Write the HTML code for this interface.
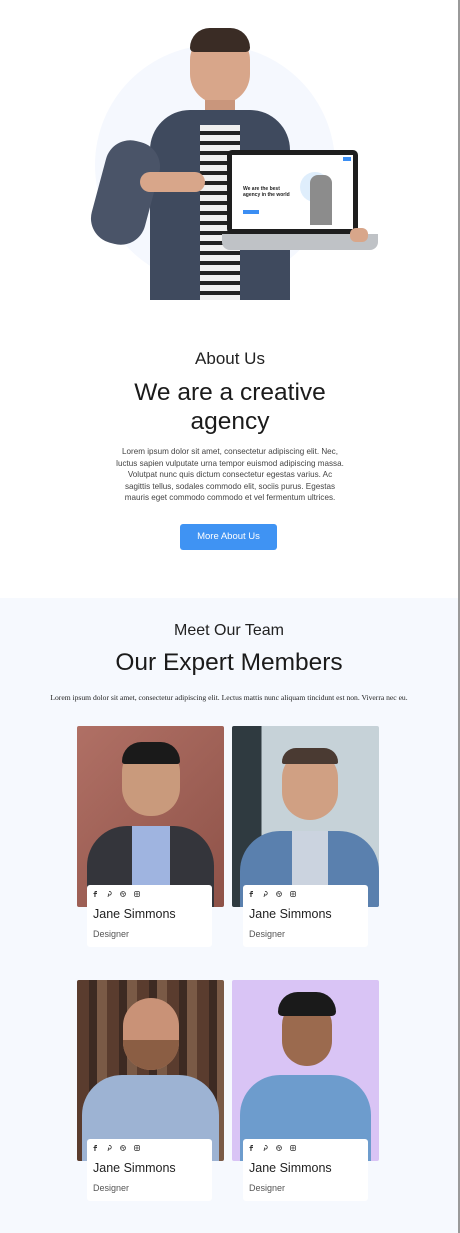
<!DOCTYPE html>
<html><head><meta charset="utf-8">
<style>
*{margin:0;padding:0;box-sizing:border-box}
body{width:460px;height:1233px;overflow:hidden;background:#fff;font-family:"Liberation Sans",sans-serif;color:#1f1f1f;position:relative}
.edge{position:absolute;right:0;top:0;width:2px;height:1233px;background:#9a9a9a}
.abs{position:absolute}
.c{text-align:center;width:100%;left:0}
.team{position:absolute;top:598px;left:0;width:458px;height:635px;background:#f6f9fe}
.photo{position:absolute;width:147px;height:181px;border-radius:2px;overflow:hidden}
.card{position:absolute;width:125px;height:62px;background:#fff;border-radius:3px}
.card .ic{position:absolute;top:6px;left:5px;display:flex;gap:8px}
.card .ic svg{width:6px;height:6px}
.card .n{position:absolute;left:6px;top:22px;font-size:12.5px;color:#222}
.card .r{position:absolute;left:6px;top:44px;font-size:9px;color:#555}
</style></head><body>
<div class="edge"></div>
<div class="abs" style="left:95px;top:45px;width:240px;height:240px;border-radius:50%;background:#f5f8fe"></div>
<div class="abs" style="left:190px;top:32px;width:60px;height:72px;border-radius:28px 28px 30px 30px;background:#d8a68a"></div>
<div class="abs" style="left:190px;top:28px;width:60px;height:24px;border-radius:28px 28px 6px 6px;background:#3a2c25"></div>
<div class="abs" style="left:205px;top:100px;width:30px;height:30px;background:#c9967c"></div>
<div class="abs" style="left:150px;top:110px;width:140px;height:190px;border-radius:40px 40px 0 0;background:#3f4a5e"></div>
<div class="abs" style="left:200px;top:125px;width:40px;height:175px;background:repeating-linear-gradient(#f0f0f0 0 6px,#222 6px 10px)"></div>
<div class="abs" style="left:98px;top:140px;width:55px;height:105px;border-radius:25px;background:#4a5468;transform:rotate(15deg)"></div>
<div class="abs" style="left:140px;top:172px;width:65px;height:20px;border-radius:10px;background:#d8a68a"></div>
<div class="abs" style="left:227px;top:150px;width:131px;height:84px;background:#1e1e1e;border-radius:5px"></div>
<div class="abs" style="left:232px;top:155px;width:121px;height:74px;background:#fff"></div>
<div class="abs" style="left:243px;top:186px;font-size:5px;font-weight:bold;line-height:6px">We are the best<br>agency in the world</div>
<div class="abs" style="left:243px;top:210px;width:16px;height:4px;background:#3b8ef3"></div>
<div class="abs" style="left:343px;top:157px;width:8px;height:4px;background:#3b8ef3"></div>
<div class="abs" style="left:300px;top:172px;width:30px;height:30px;border-radius:50%;background:#dfeefc"></div>
<div class="abs" style="left:310px;top:175px;width:22px;height:50px;background:#8c8c8c;border-radius:8px 8px 0 0"></div>
<div class="abs" style="left:222px;top:234px;width:156px;height:16px;background:#bfc2c6;border-radius:0 0 8px 8px"></div>
<div class="abs" style="left:350px;top:228px;width:18px;height:14px;border-radius:6px;background:#d8a68a"></div>

<div class="abs c" style="top:349px;font-size:17px;color:#222">About Us</div>
<div class="abs c" style="top:378px;font-size:24.5px;line-height:29px;color:#1b1b1b">We are a creative<br>agency</div>
<div class="abs c" style="top:446px;font-size:8.1px;line-height:11.6px;color:#444">Lorem ipsum dolor sit amet, consectetur adipiscing elit. Nec,<br>luctus sapien vulputate urna tempor euismod adipiscing massa.<br>Volutpat nunc quis dictum consectetur egestas varius. Ac<br>sagittis tellus, sodales commodo elit, sociis purus. Egestas<br>mauris eget commodo commodo et vel fermentum ultrices.</div>
<div class="abs" style="left:180px;top:524px;width:97px;height:26px;background:#3f93f3;border-radius:3px;color:#fff;font-size:9.5px;text-align:center;line-height:26px">More About Us</div>

<div class="team">
<div class="abs c" style="top:24px;font-size:16px;color:#222">Meet Our Team</div>
<div class="abs c" style="top:51px;font-size:24.5px;color:#1b1b1b">Our Expert Members</div>
<div class="abs c" style="top:95px;font-size:7.6px;font-family:'Liberation Serif',serif;color:#222">Lorem ipsum dolor sit amet, consectetur adipiscing elit. Lectus mattis nunc aliquam tincidunt est non. Viverra nec eu.</div>
</div>

<div class="photo" style="left:77px;top:726px;background:linear-gradient(135deg,#b07065,#8e5248)">
 <div class="abs" style="left:45px;top:18px;width:58px;height:72px;border-radius:28px;background:#c99a7c"></div>
 <div class="abs" style="left:45px;top:16px;width:58px;height:22px;border-radius:28px 28px 4px 4px;background:#1a1a1a"></div>
 <div class="abs" style="left:10px;top:100px;width:127px;height:90px;border-radius:40px 40px 0 0;background:#34353b"></div>
 <div class="abs" style="left:55px;top:100px;width:38px;height:90px;background:#9fb4e0"></div>
</div>
<div class="photo" style="left:232px;top:726px;background:linear-gradient(90deg,#2f3a40 0 20%,#c6d2d8 20%)">
 <div class="abs" style="left:50px;top:24px;width:56px;height:70px;border-radius:28px;background:#d0a083"></div>
 <div class="abs" style="left:50px;top:22px;width:56px;height:16px;border-radius:28px 28px 4px 4px;background:#4a3a32"></div>
 <div class="abs" style="left:8px;top:105px;width:139px;height:80px;border-radius:40px 40px 0 0;background:#5a80ae"></div>
 <div class="abs" style="left:60px;top:105px;width:36px;height:80px;background:#cbd3df"></div>
</div>
<div class="photo" style="left:77px;top:980px;background:repeating-linear-gradient(90deg,#5a3c2e 0 12px,#3d2a22 12px 20px,#7a5a46 20px 30px)">
 <div class="abs" style="left:46px;top:18px;width:56px;height:72px;border-radius:28px;background:#c99277"></div>
 <div class="abs" style="left:46px;top:60px;width:56px;height:30px;border-radius:0 0 28px 28px;background:#8b5e44"></div>
 <div class="abs" style="left:5px;top:95px;width:137px;height:90px;border-radius:40px 40px 0 0;background:#9db3d3"></div>
</div>
<div class="photo" style="left:232px;top:980px;background:#d9c4f5">
 <div class="abs" style="left:50px;top:20px;width:50px;height:66px;border-radius:25px;background:#9b6a4e"></div>
 <div class="abs" style="left:46px;top:12px;width:58px;height:24px;border-radius:28px 28px 6px 6px;background:#1a1a1a"></div>
 <div class="abs" style="left:8px;top:95px;width:131px;height:90px;border-radius:40px 40px 0 0;background:#6d9ccd"></div>
</div>

<div class="card" style="left:87px;top:885px"></div>
<div class="card" style="left:243px;top:885px"></div>
<div class="card" style="left:87px;top:1139px"></div>
<div class="card" style="left:243px;top:1139px"></div>
<script>
document.querySelectorAll('.card').forEach(c=>{c.innerHTML='<div class="ic"><svg viewBox="0 0 6 6"><path d="M3.5 6V3H5V2H3.5V1.3H5V0H3.6C2.7 0 2.4.6 2.4 1.4V2H1.5V3h.9v3z" fill="#333"/></svg><svg viewBox="0 0 6 6"><path d="M2 6L2.8 2.5M3 .5A1.8 1.8 0 1 1 2.6 3.8" stroke="#333" fill="none" stroke-width=".8"/></svg><svg viewBox="0 0 6 6"><circle cx="3" cy="3" r="2.5" stroke="#333" fill="none" stroke-width=".7"/><path d="M1 2C3 3 4 4 4.3 5.5M.8 3.8C2 2.5 4 2 5.4 3M2 .9C3 2 4 4 4 5" stroke="#333" fill="none" stroke-width=".4"/></svg><svg viewBox="0 0 6 6"><rect x=".5" y=".5" width="5" height="5" rx="1.3" stroke="#333" fill="none" stroke-width=".7"/><circle cx="3" cy="3" r="1.1" stroke="#333" fill="none" stroke-width=".6"/></svg></div><div class="n">Jane Simmons</div><div class="r">Designer</div>'});
</script>
</body></html>
